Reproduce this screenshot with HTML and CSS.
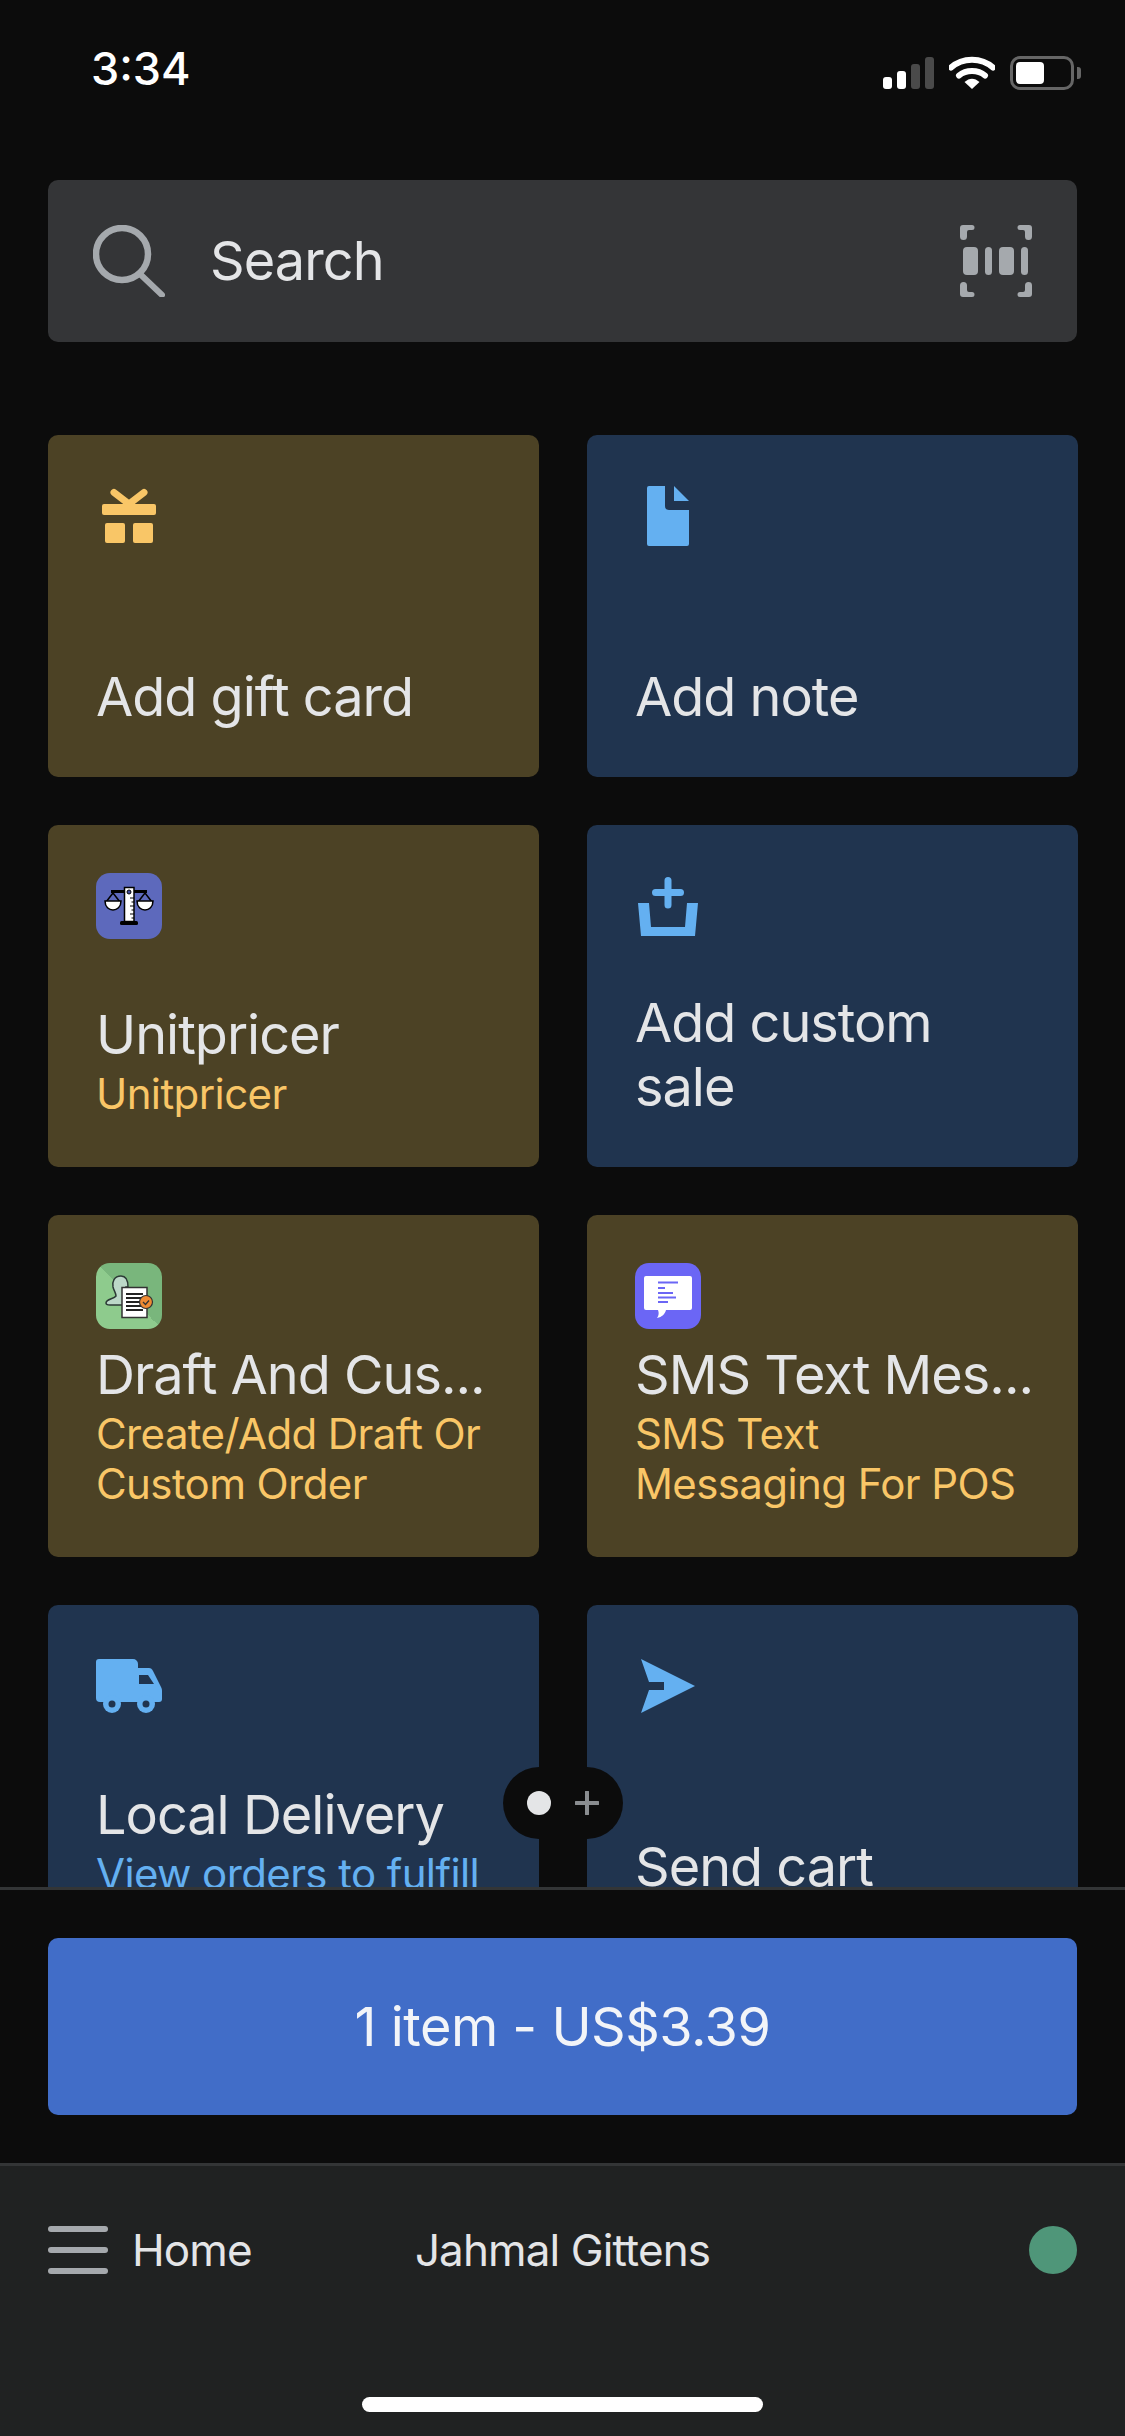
FILE: index.html
```html
<!DOCTYPE html>
<html lang="en">
<head>
  <meta charset="UTF-8">
  <meta name="viewport" content="width=device-width, initial-scale=1.0">
  <title>Home - Jahmal Gittens</title>
  <link rel="stylesheet" href="styles.css">
</head>
<body>
  <div class="app">
    <header class="status-bar">
      <span class="time">3:34</span>
      <div class="status-icons">
        <div class="signal">
          <span class="bar bar-1"></span>
          <span class="bar bar-2"></span>
          <span class="bar bar-3 off"></span>
          <span class="bar bar-4 off"></span>
        </div>
        <svg class="wifi" width="46" height="33" viewBox="0 0 46 33">
          <path d="M2 11.5C13.500 1 32.500 1 44 11.500" fill="none" stroke="#fff" stroke-width="6" stroke-linecap="round"/>
          <path d="M10 19.500C17 13.500 29 13.500 36 19.500" fill="none" stroke="#fff" stroke-width="6" stroke-linecap="round"/>
          <path d="M15.500 26C20.500 21.500 25.500 21.500 30.500 26L23 33Z" fill="#fff"/>
        </svg>
        <div class="battery">
          <div class="battery-body"><span class="battery-fill"></span></div>
          <span class="battery-tip"></span>
        </div>
      </div>
    </header>

    <main class="content">
      <div class="search">
        <svg class="search-icon" width="72" height="72" viewBox="0 0 72 72">
          <circle cx="29" cy="29" r="26" fill="none" stroke="#a5a9ad" stroke-width="6.500"/>
          <path d="M47 49L69 70" stroke="#a5a9ad" stroke-width="6" stroke-linecap="round"/>
        </svg>
        <span class="search-label">Search</span>
        <svg class="barcode" width="72" height="72" viewBox="0 0 72 72" fill="#a5a9ad">
          <path d="M3 0H12A2.500 2.500 0 0 1 12 5H9A2 2 0 0 0 7 7V11.500A3.500 3.500 0 0 1 0 11.500V3A3 3 0 0 1 3 0Z"/>
          <path d="M69 0H60A2.500 2.500 0 0 0 60 5H63A2 2 0 0 1 65 7V11.500A3.500 3.500 0 0 0 72 11.500V3A3 3 0 0 0 69 0Z"/>
          <path d="M3 72H12A2.500 2.500 0 0 0 12 67H9A2 2 0 0 1 7 65V60.500A3.500 3.500 0 0 0 0 60.500V69A3 3 0 0 0 3 72Z"/>
          <path d="M69 72H60A2.500 2.500 0 0 1 60 67H63A2 2 0 0 0 65 65V60.500A3.500 3.500 0 0 1 72 60.500V69A3 3 0 0 1 69 72Z"/>
          <rect x="3" y="22" width="15" height="28" rx="4"/>
          <rect x="25" y="22" width="7" height="28" rx="3.500"/>
          <rect x="39" y="22" width="15" height="28" rx="4"/>
          <rect x="61" y="22" width="7" height="28" rx="3.500"/>
        </svg>
      </div>

      <div class="tiles">
        <div class="tile gold">
          <svg class="tile-icon" viewBox="0 0 66 66" fill="#f9c667">
            <path d="M18 9.500L33 21L48 9.500" fill="none" stroke="#f9c667" stroke-width="7" stroke-linecap="round" stroke-linejoin="round"/>
            <rect x="6" y="21" width="54" height="11" rx="2"/>
            <rect x="9" y="40" width="20" height="20" rx="2"/>
            <rect x="37" y="40" width="20" height="20" rx="2"/>
          </svg>
          <div class="tile-text"><div class="tile-title">Add gift card</div></div>
        </div>

        <div class="tile blue">
          <svg class="tile-icon" viewBox="0 0 66 66" fill="#64b0f1">
            <path d="M14 3H30V23A4 4 0 0 0 34 27H54V61A2 2 0 0 1 52 63H14A2 2 0 0 1 12 61V5A2 2 0 0 1 14 3Z"/>
            <path d="M39 3L54 18H39Z"/>
          </svg>
          <div class="tile-text"><div class="tile-title">Add note</div></div>
        </div>

        <div class="tile gold">
          <svg class="tile-icon" viewBox="0 0 66 66">
            <rect width="66" height="66" rx="14" fill="#5d69bc"/>
            <rect x="15" y="17" width="36" height="3" fill="#000"/>
            <path d="M17 20L10 29M17 20L24 29M49 20L42 29M49 20L56 29" stroke="#000" stroke-width="1.500" fill="none"/>
            <path d="M9 28H25C25 40 9 40 9 28ZM41 28H57C57 40 41 40 41 28Z" fill="#fff" stroke="#000" stroke-width="1.500"/>
            <rect x="24" y="48" width="18" height="4" rx="1.500" fill="#000"/>
            <rect x="28.500" y="14.500" width="9.500" height="34" fill="#fff" stroke="#000" stroke-width="1.500"/>
            <circle cx="33" cy="19" r="2" fill="#3f4a9c" stroke="#000"/>
            <path d="M34 25H38M35.500 29H38M34 33H38M35.500 37H38M34 41H38M35.500 45H38" stroke="#000" stroke-width="1.200"/>
          </svg>
          <div class="tile-text">
            <div class="tile-title">Unitpricer</div>
            <div class="tile-sub">Unitpricer</div>
          </div>
        </div>

        <div class="tile blue">
          <svg class="tile-icon" viewBox="0 0 66 66" fill="#64b0f1">
            <path d="M33 7.500V32M20.500 19.500H45.500" fill="none" stroke="#64b0f1" stroke-width="7" stroke-linecap="round"/>
            <path d="M3 30H14L16 54H50L52 30H63L60 63H6Z"/>
          </svg>
          <div class="tile-text">
            <div class="tile-title wrap">Add custom sale</div>
          </div>
        </div>

        <div class="tile gold">
          <svg class="tile-icon" viewBox="0 0 66 66">
            <defs>
              <linearGradient id="draftBg" x1="0" y1="1" x2="1" y2="0">
                <stop offset="0.500" stop-color="#8ecb8d"/>
                <stop offset="0.500" stop-color="#79b67c"/>
              </linearGradient>
            </defs>
            <rect width="66" height="66" rx="14" fill="url(#draftBg)"/>
            <path d="M25 13C18 13 16 19 17 24C18 28 20 30 20 33C18 36 10 36 10 40C10 42 12 42 14 42H30V24H32C32 18 30 13 25 13Z" fill="#bcd8c8" stroke="#2c3a36" stroke-width="1.500"/>
            <rect x="26" y="24.500" width="25" height="30" fill="#fff" stroke="#333" stroke-width="1.500"/>
            <path d="M30 31H47M30 35H47M30 39H45M30 43H45M30 47H47" stroke="#222" stroke-width="1.800"/>
            <circle cx="50" cy="39" r="6.500" fill="#ef8a33" stroke="#333" stroke-width="1.200"/>
            <path d="M47 39L49.500 41.500L53 37.500" fill="none" stroke="#333" stroke-width="1.300"/>
          </svg>
          <div class="tile-text">
            <div class="tile-title">Draft And Cus...</div>
            <div class="tile-sub">Create/Add Draft Or Custom Order</div>
          </div>
        </div>

        <div class="tile gold">
          <svg class="tile-icon" viewBox="0 0 66 66">
            <rect width="66" height="66" rx="14" fill="#6b66f5"/>
            <path d="M11 13H55A2 2 0 0 1 57 15V45A2 2 0 0 1 55 47H31C30 51 27 54 22 55C24 52 24 50 23 47H11A2 2 0 0 1 9 45V15A2 2 0 0 1 11 13Z" fill="#fff"/>
            <path d="M23 19.500H43M23 25H30M23 30H38M23 34.500H41M23 39H33" stroke="#6b66f5" stroke-width="2.200"/>
          </svg>
          <div class="tile-text">
            <div class="tile-title">SMS Text Mes...</div>
            <div class="tile-sub">SMS Text Messaging For POS</div>
          </div>
        </div>

        <div class="tile blue">
          <svg class="tile-icon" viewBox="0 0 66 66">
            <path d="M3 6H37A5 5 0 0 1 42 11V49H4A4 4 0 0 1 0 45V9A3 3 0 0 1 3 6Z" fill="#64b0f1"/>
            <path d="M42 15H53C55 15 56 16 57 18L65 34C66 36 66 37 66 39V46C66 48 65 49 63 49H42Z" fill="#64b0f1"/>
            <path d="M43 22H52L58 31H43Z" fill="#20344f"/>
            <circle cx="16" cy="51" r="9" fill="#64b0f1"/>
            <circle cx="16" cy="51" r="3.500" fill="#20344f"/>
            <circle cx="50" cy="51" r="9" fill="#64b0f1"/>
            <circle cx="50" cy="51" r="3.500" fill="#20344f"/>
          </svg>
          <div class="tile-text">
            <div class="tile-title">Local Delivery</div>
            <div class="tile-sub blue-sub">View orders to fulfill</div>
          </div>
        </div>

        <div class="tile blue">
          <svg class="tile-icon" viewBox="0 0 66 66" fill="#64b0f1">
            <path d="M6 6L60 33L6 60L14 37H29V29H14Z"/>
          </svg>
          <div class="tile-text"><div class="tile-title">Send cart</div></div>
        </div>
      </div>

      <div class="pager">
        <span class="pager-dot"></span>
        <svg class="pager-plus" width="24" height="24" viewBox="0 0 24 24">
          <path d="M12 1V23M1 12H23" stroke="#8a8d90" stroke-width="4" stroke-linecap="round"/>
        </svg>
      </div>
    </main>

    <section class="checkout">
      <button type="button" class="checkout-btn">1 item - US$3.39</button>
    </section>

    <footer class="bottom-bar">
      <div class="bottom-row">
        <div class="menu">
          <div class="burger"><span></span><span></span><span></span></div>
          <span class="menu-label">Home</span>
        </div>
        <span class="staff-name">Jahmal Gittens</span>
        <span class="online"></span>
      </div>
      <div class="home-indicator"></div>
    </footer>
  </div>
</body>
</html>
```

FILE: styles.css
```css
* {
  box-sizing: border-box;
}
body {
  margin: 0;
  padding: 0;
  background-color: #0c0c0c;
  color: #e4e5e7;
  font-family: Inter, "Liberation Sans", sans-serif;
}
.app {
  width: 1125px;
  height: 2436px;
  display: flex;
  flex-direction: column;
  overflow: hidden;
}

/* status bar */
.status-bar {
  height: 180px;
  padding: 47px 44px 0 91px;
  display: flex;
  justify-content: space-between;
  align-items: flex-start;
}
.time {
  color: #fff;
  font-size: 45px;
  font-weight: 500;
  line-height: 44px;
}
.status-icons {
  display: flex;
  align-items: flex-end;
  gap: 15px;
  height: 38px;
  margin-top: 5px;
}
.signal {
  display: flex;
  align-items: flex-end;
  gap: 5px;
  height: 32px;
  margin-bottom: 1px;
}
.bar {
  width: 9px;
  border-radius: 3px;
  background-color: #fff;
}
.bar.off {
  background-color: #4a4a4a;
}
.bar-1 { height: 12px; }
.bar-2 { height: 18px; }
.bar-3 { height: 25px; }
.bar-4 { height: 32px; }
.wifi {
  display: block;
  margin-bottom: 1px;
}
.battery {
  display: flex;
  align-items: center;
  gap: 3px;
}
.battery-body {
  width: 64px;
  height: 34px;
  padding: 3px;
  border: 3px solid #666;
  border-radius: 10px;
}
.battery-fill {
  display: block;
  width: 28px;
  height: 22px;
  border-radius: 4px;
  background-color: #fff;
}
.battery-tip {
  width: 4px;
  height: 12px;
  border-radius: 0 3px 3px 0;
  background-color: #666;
}

/* search and tiles */
.content {
  position: relative;
  height: 1707px;
  padding: 0 48px;
  overflow: hidden;
}
.search {
  height: 162px;
  padding: 0 45px;
  display: flex;
  align-items: center;
  border-radius: 10px;
  background-color: #343537;
}
.search-icon {
  flex: none;
}
.search-label {
  flex: 1;
  margin-left: 45px;
  margin-bottom: 2px;
  font-size: 54px;
  letter-spacing: -0.9px;
}
.barcode {
  flex: none;
}
.tiles {
  display: grid;
  grid-template-columns: 491px 491px;
  grid-auto-rows: 342px;
  gap: 48px;
  justify-content: space-between;
  margin-top: 93px;
}
.tile {
  padding: 48px;
  display: flex;
  flex-direction: column;
  justify-content: space-between;
  border-radius: 10px;
}
.tile.gold {
  background-color: #4c4225;
}
.tile.blue {
  background-color: #20344f;
}
.tile-icon {
  display: block;
  flex: none;
  width: 66px;
  height: 66px;
}
.tile-title {
  font-size: 54px;
  line-height: 64px;
  letter-spacing: -1px;
  white-space: nowrap;
}
.tile-title.wrap {
  white-space: normal;
}
.tile-sub {
  margin-top: 2px;
  font-size: 42px;
  line-height: 50px;
  letter-spacing: -0.6px;
  color: #f9c667;
}
.tile-sub.blue-sub {
  color: #64b0f1;
}

/* floating page switcher */
.pager {
  position: absolute;
  left: 503px;
  top: 1587px;
  width: 120px;
  height: 72px;
  padding: 0 24px;
  display: flex;
  align-items: center;
  justify-content: space-between;
  border-radius: 36px;
  background-color: #0c0c0c;
}
.pager-dot {
  width: 24px;
  height: 24px;
  border-radius: 50%;
  background-color: #e4e5e7;
}
.pager-plus {
  display: block;
}

/* checkout */
.checkout {
  height: 276px;
  padding: 48px 48px 0;
  border-top: 3px solid #333536;
}
.checkout-btn {
  display: block;
  width: 100%;
  height: 177px;
  border: none;
  border-radius: 10px;
  background-color: #416dc8;
  color: #f2f4f8;
  font-family: inherit;
  font-size: 54px;
  letter-spacing: -0.5px;
}

/* bottom nav */
.bottom-bar {
  flex: 1;
  padding: 60px 48px 0;
  border-top: 3px solid #333536;
  background-color: #202222;
}
.bottom-row {
  position: relative;
  height: 48px;
  display: flex;
  align-items: center;
  justify-content: space-between;
}
.menu {
  display: flex;
  align-items: center;
  gap: 24px;
}
.burger {
  width: 60px;
  height: 48px;
  display: flex;
  flex-direction: column;
  justify-content: space-between;
}
.burger span {
  display: block;
  height: 6px;
  border-radius: 3px;
  background-color: #a5a9ad;
}
.menu-label,
.staff-name {
  font-size: 44px;
  letter-spacing: -0.9px;
}
.staff-name {
  position: absolute;
  left: 0;
  right: 0;
  text-align: center;
}
.online {
  width: 48px;
  height: 48px;
  border-radius: 50%;
  background-color: #4f9679;
}
.home-indicator {
  width: 401px;
  height: 15px;
  margin: 123px auto 0;
  border-radius: 8px;
  background-color: #fff;
}
```
